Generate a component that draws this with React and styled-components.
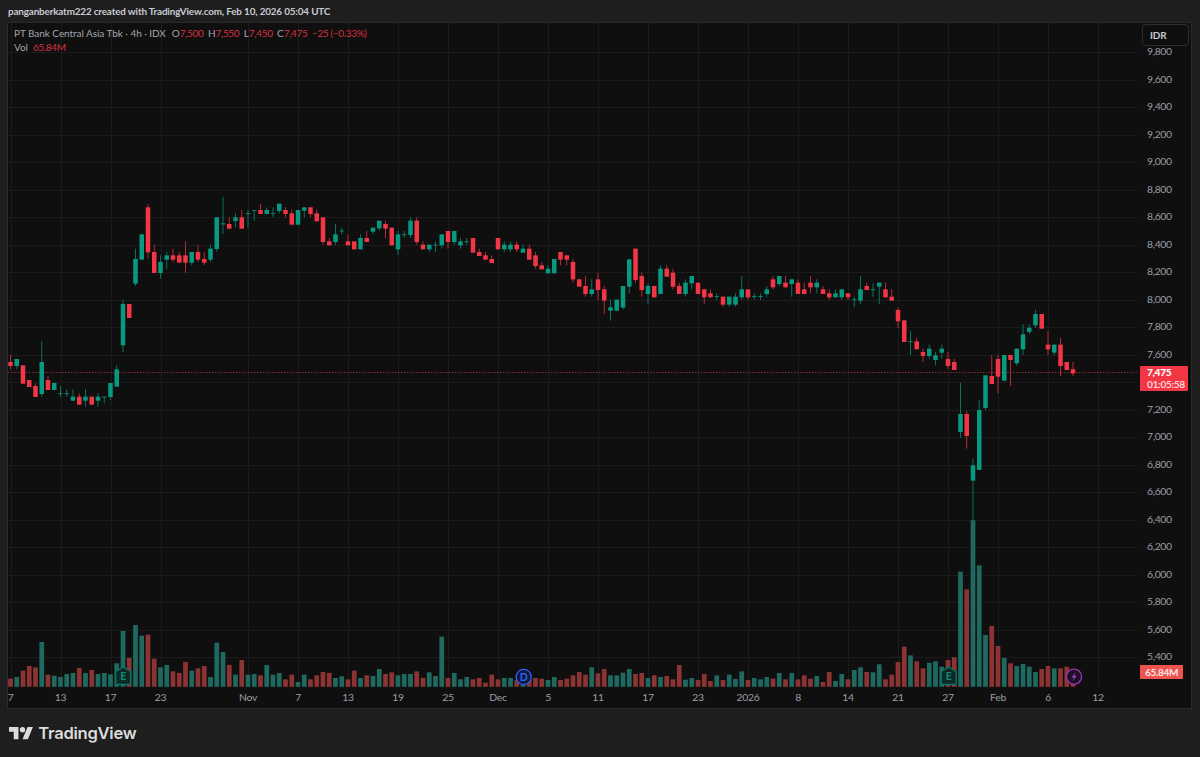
import React from "react";
import styled, { createGlobalStyle } from "styled-components";

const Global = createGlobalStyle`
  html, body { margin: 0; padding: 0; background: #1e1e1e; }
  #root { width: 1200px; height: 757px; overflow: hidden; }
`;

const FONT = `Lato, "Open Sans", "Liberation Sans", sans-serif`;
const UP = "#089981";
const DOWN = "#f23645";
const VOL_UP = "#1f6a60";
const VOL_DOWN = "#8b3433";
const GRID = "#1b1b1b";

const Page = styled.div`
  width: 1200px;
  height: 757px;
  background: #1e1e1e;
  display: flex;
  flex-direction: column;
  font-family: ${FONT};
`;
const Credit = styled.div`
  height: 22px;
  padding-left: 8px;
  display: flex;
  align-items: center;
  font-size: 9.9px;
  letter-spacing: -0.15px;
  font-weight: 700;
  color: #c8cbd2;
  white-space: nowrap;
`;
const Frame = styled.div`
  position: relative;
  box-sizing: border-box;
  width: 1185px;
  height: 687px;
  margin-left: 7px;
  border: 1px solid #2a2a2a;
  background: #0f0f0f;
  display: grid;
  grid-template-columns: 1129px 54px;
  grid-template-rows: 664px 21px;
`;
const Pane = styled.div`
  position: relative;
  overflow: hidden;
`;
const ChartSvg = styled.svg`
  display: block;
  width: 1129px;
  height: 664px;
`;
const Legend = styled.div`
  position: absolute;
  left: 6px;
  top: 3px;
  font-size: 10px;
  line-height: 14px;
  letter-spacing: -0.05px;
  color: #a3a6ad;
  white-space: nowrap;
`;
const LegendRow = styled.div`
  display: flex;
  gap: ${(p) => p.$gap || 0}px;
`;
const Symbol = styled.span`
  margin-right: 1.5px;
`;
const Red = styled.span`
  color: #d8313e;
  letter-spacing: -0.35px;
`;
const PriceAxis = styled.div`
  padding-top: 15.25px;
  overflow: hidden;
  grid-row: 1;
  grid-column: 2;
`;
const PriceTick = styled.div`
  height: 27.5px;
  line-height: 27.5px;
  padding-left: 10px;
  font-size: 10.4px;
  letter-spacing: -0.35px;
  color: #9b9ea5;
`;
const TimeAxis = styled.div`
  grid-column: 1 / span 2;
  grid-row: 2;
  display: flex;
  align-items: flex-start;
  padding-top: 4px;
  overflow: hidden;
`;
const TimeTick = styled.div`
  width: 0;
  margin-left: ${(p) => p.$gap}px;
  display: flex;
  justify-content: center;
  font-size: 10.4px;
  letter-spacing: -0.3px;
  line-height: 13px;
  color: #9b9ea5;
`;
const CurrencyButton = styled.div`
  position: absolute;
  left: 1134px;
  top: 1px;
  box-sizing: border-box;
  width: 47px;
  height: 22px;
  display: flex;
  align-items: center;
  padding-left: 7px;
  background: #0f0f0f;
  border: 1px solid #2e2e2e;
  border-radius: 4px;
  font-size: 10px;
  letter-spacing: -0.2px;
  font-weight: 700;
  color: #c8cbd2;
`;
const PriceTag = styled.div`
  position: absolute;
  left: 1132px;
  top: 343px;
  box-sizing: border-box;
  width: 48px;
  height: 25px;
  padding-left: 7px;
  background: ${DOWN};
  border-radius: 1px;
  font-size: 10.2px;
  line-height: 12.4px;
  letter-spacing: -0.35px;
  white-space: nowrap;
`;
const TagPrice = styled.div`
  color: #fff;
  font-weight: 900;
`;
const TagCountdown = styled.div`
  color: #ffd5d9;
  font-weight: 700;
`;
const VolumeTag = styled.div`
  position: absolute;
  left: 1132px;
  top: 642px;
  box-sizing: border-box;
  width: 43px;
  height: 14px;
  line-height: 14px;
  text-align: center;
  background: #ef5350;
  border-radius: 1px;
  font-size: 10px;
  letter-spacing: -0.3px;
  font-weight: 700;
  color: #ffe6e6;
`;
const Footer = styled.div`
  flex: 1;
  display: flex;
  align-items: center;
  gap: 5px;
  padding-left: 9px;
`;
const LogoWord = styled.span`
  font-family: Inter, "Liberation Sans", sans-serif;
  font-size: 16.6px;
  font-weight: 600;
  letter-spacing: -0.28px;
  color: #dcdcdc;
`;

const X = (i) => 10.5 + 6.25 * i;
const Y = (p) => 354.5 + ((7600 - p) * 27.5) / 200;

const seg = (origin, start, rows) =>
  rows.map((r, k) => ({
    i: start + k,
    up: r[0] === "g",
    wt: origin + (r[1] ?? r[2]) / 3,
    bt: origin + r[2] / 3,
    bb: origin + r[3] / 3,
    wb: origin + (r[4] ?? r[3]) / 3,
  }));

const n = null;
const candles = [
  ...seg(190, 0, [
    ["r",495,516,528,538],["g",n,507,528,538],["r",n,526,581,n],["r",n,570,591,n],["r",580,588,621,n],["g",454,516,612,620],
    ["r",558,570,600,n],["g",n,579,600,n],["g",588,610,612,620],["g",598,610,612,620],["g",598,620,632,n],["r",610,620,644,n],
    ["g",598,620,632,650],["r",n,620,644,n],["g",610,620,632,650],["g",n,620,622,640],["g",n,579,621,630],["g",526,538,590,n],
    ["g",330,342,466,486],["r",n,342,384,n],["g",176,207,281,288],["g",n,133,209,n],["r",42,52,187,206],["r",164,186,249,n],
    ["g",196,216,249,266],["g",186,196,209,236],["r",176,196,209,216],["r",186,196,218,n],["r",154,196,218,248],["g",n,186,218,226],
    ["r",164,186,209,216],["r",186,207,218,226],["g",164,176,209,216],["g",n,82,177,185],["g",20,100,103,132],["r",82,102,116,n],
    ["g",70,82,93,113],["r",60,82,116,n],["g",60,70,72,113],["g",n,60,62,92],["r",42,60,72,n],["g",52,60,72,n],["g",52,70,72,82],
    ["g",n,41,63,70],["r",52,60,72,82],["r",60,70,104,n],["g",n,60,104,n],
    ["g",n,52,62,82],["r",n,52,72,82],["r",60,70,94,n],["r",n,82,156,164],["r",144,154,166,n],["g",101,133,156,164],["g",113,122,124,133],
    ["r",133,154,166,n],["r",n,154,178,n],["g",133,144,178,n],["r",123,144,156,n],["g",n,113,125,133],["g",n,92,115,122],["r",92,102,116,144],
    ["r",n,113,166,n],["g",123,133,178,195],["g",123,133,135,144],["g",82,92,135,144],["r",82,92,156,164],["r",154,164,178,n],["g",n,164,178,186],
    ["g",154,164,166,186],["g",n,133,166,176],["r",n,123,156,176],["g",n,123,156,164],["g",144,154,166,176],["g",144,154,156,164],["r",n,144,188,n],
    ["r",176,186,198,n],["r",186,196,209,n],["r",196,207,219,n],["r",n,144,178,n],["g",154,164,178,186],["g",154,164,178,186],["r",154,164,178,186],
    ["g",164,176,188,n],["r",164,176,209,n],["r",186,196,228,236],["r",216,226,238,n],["g",226,236,250,n],["g",n,207,250,n],["r",n,186,209,226],
    ["r",n,196,209,226],["r",207,216,268,278],["r",n,268,290,n],["r",258,288,312,320],["g",268,298,312,320],["r",248,268,300,330],
  ]),
  ...seg(230, 95, [
    ["r",168,178,212,252],["g",208,232,242,272],["g",n,209,242,n],["g",n,168,233,238],["g",n,88,170,190],["r",n,56,150,158],["r",128,138,180,200],
    ["g",160,168,192,222],["r",n,168,202,n],["g",106,116,192,n],["r",106,116,140,n],["r",116,128,170,178],["r",158,168,192,n],["g",148,158,192,200],
    ["g",n,138,160,178],["r",n,158,192,n],["r",n,178,202,222],["r",178,190,202,n],["g",190,198,200,210],["r",n,200,224,230],["g",n,200,224,230],
    ["g",190,200,224,230],["g",138,178,202,210],["r",n,178,202,210],["g",190,198,200,210],["g",190,198,200,210],["g",168,178,192,200],["r",138,148,172,178],
    ["g",n,138,162,168],["r",138,158,172,n],["g",n,148,162,200],["r",148,158,192,n],["r",158,178,192,n],["r",138,158,172,190],["g",148,158,172,190],
    ["r",168,178,192,n],["r",178,190,202,210],["g",178,190,202,n],["g",n,178,202,210],["r",n,190,202,210],["g",200,208,210,232],["g",138,178,212,222],
    ["r",158,168,180,n],["g",160,178,180,200],["g",n,158,170,222],["r",158,178,202,n],["r",178,200,212,n],
  ]),
  ...seg(290, 142, [
    ["r",52,60,94,114],["r",n,91,156,n],["g",123,154,156,195],["r",144,154,178,n],["r",176,186,198,216],["g",164,176,198,206],["g",186,196,210,226],
    ["g",164,176,188,206],["r",186,207,228,238],["r",207,216,240,n],["g",278,372,426,444],["r",362,372,438,476],["g",506,526,572,694],["g",330,360,540,n],
    ["g",n,256,354,360],["r",195,258,282,n],["r",195,207,260,310],["g",n,195,272,n],["r",n,195,210,288],["g",n,176,220,226],["g",103,133,178,195],
    ["g",103,113,126,132],["g",60,72,106,114],["r",n,72,116,n],["r",123,164,178,195],["g",n,164,188,195],["r",144,164,228,258],["r",n,216,240,n],["r",216,238,250,258],
  ]),
];

const vseg = (origin, start, s) =>
  s.trim().split(/\s+/).map((t, k) => ({
    i: start + k,
    up: t[0] === "g",
    top: origin + Number(t.slice(1)) / 3,
  }));

const volumes = [
  ...vseg(620, 0, "r176 g171 r152 r138 r142 g66 r164 g167 g171 g162 g159 r144 g159 r150 g162 g159 g163 g130 g33 r114 g15 g47 r44 r116 g142 g135 r154 r159 r126 g152 r145 r138 g171 g68 g96 r135 g164 r120 g164 g162 r166 g135 g164 g159 r178 r164 g186"),
  ...vseg(630, 47, "g134 r148 r136 r126 r129 g144 g139 r148 r122 g144 r136 g138 g117 r132 r127 g136 g132 g132 r124 r144 g127 g138 g20 r144 g129 g148 g141 r148 r144 r158 r134 r148 g144 g144 r150 g165 r150 r144 r146 g150 g141 r150 r146 r136 r126 r134 g112 r130"),
  ...vseg(630, 95, "r117 g136 g136 g128 g117 r132 r129 g144 r136 g141 r138 r148 r105 g149 g144 r150 r132 r153 g136 r150 g134 g147 g124 r150 g144 g148 g141 r146 g129 r148 g129 r148 r136 r146 g138 r156 r126 g153 g132 r148 g120 g112 r126 g127 g103 r148 r134 r96"),
  ...vseg(480, 143, "r500 g526 r544 r565 g548 g544 g560 r540 r532 g275 r328 g121 g256 g465 r438 r498 g534 r550 g558 g552 g560 g576 r567 r558 g565 r565 r560 r610"),
];

const prices = [];
for (let p = 9800; p >= 5400; p -= 200) prices.push(p);

// The last-price tag covers the 7,400 tick, so that row stays empty.
const COVERED_TICK = 7400;

const times = [
  ["7", 10.5], ["13", 60.5], ["17", 110.5], ["23", 160.5], ["Nov", 248], ["7", 298], ["13", 348], ["19", 398], ["25", 448],
  ["Dec", 498], ["5", 548], ["11", 598], ["17", 648], ["23", 698], ["2026", 748], ["8", 798], ["14", 848], ["21", 898],
  ["27", 948], ["Feb", 998], ["6", 1048], ["12", 1098],
];

const EarningsMark = ({ x }) => (
  <g transform={`translate(${x} 668)`}>
    <path d="M-7.5 3.5 L0 -1 L7.5 3.5 V15 Q7.5 16.5 6 16.5 H-6 Q-7.5 16.5 -7.5 15 Z" fill="#0e2a26" stroke="#067a68" strokeWidth="1.3" />
    <text x="0" y="12" textAnchor="middle" fontSize="10.5" fontWeight="700" fontFamily={FONT} fill="#0a8f79">E</text>
  </g>
);

const Chart = () => (
  <ChartSvg viewBox="8 23 1129 664">
    {prices.map((p) => (
      <rect key={p} x="8" y={Math.round(Y(p))} width="1129" height="1" fill={GRID} />
    ))}
    {times.map(([t, x]) => (
      <rect key={x} x={Math.round(x)} y="23" width="1" height="664" fill={GRID} />
    ))}
    {volumes.map((v) => (
      <rect key={v.i} x={X(v.i) - 2.35} y={v.top} width="4.7" height={686.8 - v.top} fill={v.up ? VOL_UP : VOL_DOWN} />
    ))}
    <line x1="8" x2="1137" y1="372.5" y2="372.5" stroke="#8f2630" strokeWidth="1" strokeDasharray="1.5 1.5" />
    {candles.map((c) => (
      <g key={c.i} fill={c.up ? UP : DOWN}>
        <rect x={X(c.i) - 0.45} y={c.wt} width="0.9" height={c.wb - c.wt} opacity="0.8" />
        <rect x={X(c.i) - 2.25} y={c.bt} width="4.5" height={Math.max(c.bb - c.bt, 0.8)} />
      </g>
    ))}
    <EarningsMark x={123.2} />
    <EarningsMark x={948.7} />
    <circle cx="523.7" cy="677" r="7.6" fill="#0f1a3a" stroke="#2962ff" strokeWidth="1.3" />
    <text x="523.7" y="680.8" textAnchor="middle" fontSize="10.5" fontWeight="700" fontFamily={FONT} fill="#2f66f2">D</text>
    <circle cx="1074" cy="676.7" r="7.6" fill="#1d1024" stroke="#9c36b5" strokeWidth="1.3" />
    <path d="M1075.6 672 L1071.4 677.4 H1074 L1072.4 681.4 L1076.8 675.9 H1074.2 Z" fill="#a23cc0" />
  </ChartSvg>
);

const Logo = () => (
  <svg width="24.3" height="16.2" viewBox="0 1 36 24" aria-hidden="true">
    <path d="M14 22H7V11H0V4h14v18zM28 22h-8l7.5-18h8L28 22z" fill="#dcdcdc" />
    <circle cx="20" cy="8" r="4" fill="#dcdcdc" />
  </svg>
);

const fmt = (p) => p.toLocaleString("en-US");

export default function App() {
  return (
    <Page>
      <Global />
      <Credit>panganberkatm222 created with TradingView.com, Feb 10, 2026 05:04 UTC</Credit>
      <Frame>
        <Pane>
          <Chart />
          <Legend>
            <LegendRow $gap={4.5}>
              <Symbol>PT Bank Central Asia Tbk · 4h · IDX</Symbol>
              <span>O<Red>7,500</Red></span>
              <span>H<Red>7,550</Red></span>
              <span>L<Red>7,450</Red></span>
              <span>C<Red>7,475</Red></span>
              <Red>−25 (−0.33%)</Red>
            </LegendRow>
            <LegendRow $gap={5}>
              <span>Vol</span>
              <Red>65.84M</Red>
            </LegendRow>
          </Legend>
        </Pane>
        <PriceAxis>
          {prices.map((p) => (
            <PriceTick key={p}>{p === COVERED_TICK ? "" : fmt(p)}</PriceTick>
          ))}
        </PriceAxis>
        <TimeAxis>
          {times.map(([t, x], k) => (
            <TimeTick key={x} $gap={k === 0 ? x - 8 : x - times[k - 1][1]}>
              {t}
            </TimeTick>
          ))}
        </TimeAxis>
        <CurrencyButton>IDR</CurrencyButton>
        <PriceTag>
          <TagPrice>7,475</TagPrice>
          <TagCountdown>01:05:58</TagCountdown>
        </PriceTag>
        <VolumeTag>65.84M</VolumeTag>
      </Frame>
      <Footer>
        <Logo />
        <LogoWord>TradingView</LogoWord>
      </Footer>
    </Page>
  );
}
